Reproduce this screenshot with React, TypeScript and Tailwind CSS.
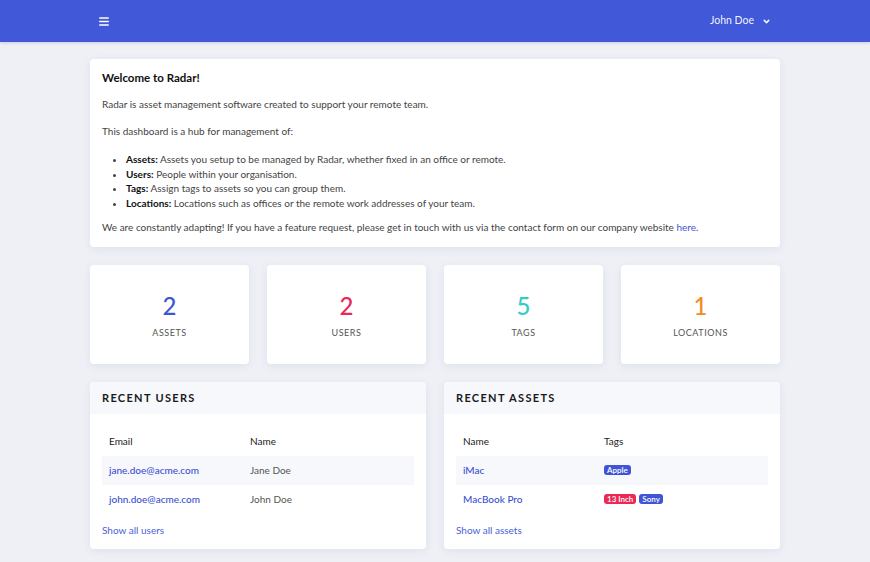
import { ChevronDown } from "lucide-react";

const stats = [
  { value: "2", label: "Assets", color: "text-[#3f55d6]" },
  { value: "2", label: "Users", color: "text-[#ea2a55]" },
  { value: "5", label: "Tags", color: "text-[#34cdc5]" },
  { value: "1", label: "Locations", color: "text-[#f28c28]" },
];

const users = [
  { email: "jane.doe@acme.com", name: "Jane Doe" },
  { email: "john.doe@acme.com", name: "John Doe" },
];

const assets = [
  { name: "iMac", tags: [{ label: "Apple", color: "bg-[#3f55d6]" }] },
  {
    name: "MacBook Pro",
    tags: [
      { label: "13 Inch", color: "bg-[#ea2a55]" },
      { label: "Sony", color: "bg-[#3f55d6]" },
    ],
  },
];

const Panel = ({ title, children }: { title: string; children: React.ReactNode }) => (
  <div className="col-span-2 rounded bg-white shadow-[0_2px_8px_rgba(60,70,120,0.08)]">
    <div className="flex h-8 items-center rounded-t bg-[#f7f8fb] px-3">
      <h3 className="pt-px text-[11px] font-bold uppercase tracking-[0.12em] text-[#1a1a1a]">{title}</h3>
    </div>
    <div className="px-3 pb-3 pt-[13px]">{children}</div>
  </div>
);

export default function App() {
  return (
    <div className="min-h-screen bg-[#eef0f6] font-['Lato','Noto_Sans',sans-serif] text-[#333]">
      <header className="h-[42px] bg-[#4158d9] shadow-[0_1px_3px_rgba(0,0,0,0.15)]">
        <div className="mx-auto flex h-full w-[690px] items-center justify-between pl-[9px] pr-[9px]">
          <svg width="10" height="9" viewBox="0 0 10 9" className="text-white">
            <path d="M0.8 1h8.4M0.8 4.5h8.4M0.8 8h8.4" stroke="currentColor" strokeWidth="1.6" strokeLinecap="round" />
          </svg>
          <div className="flex items-center gap-[8px] text-[10.5px] text-white/95">
            <span>John Doe</span>
            <ChevronDown className="h-[9px] w-[9px]" strokeWidth={4} />
          </div>
        </div>
      </header>

      <main className="mx-auto w-[690px] pt-[17px]">
        <section className="rounded bg-white px-3 pb-[12px] pt-[9px] text-[10px] leading-[14.5px] text-[#444] shadow-[0_2px_8px_rgba(60,70,120,0.08)]">
          <h2 className="text-[11.5px] font-bold leading-5 text-[#111]">Welcome to Radar!</h2>
          <p className="mt-[9px]">Radar is asset management software created to support your remote team.</p>
          <p className="mt-[12.5px]">This dashboard is a hub for management of:</p>
          <ul className="mt-[13.5px] list-disc pl-6">
            <li>
              <strong className="font-bold text-[#111]">Assets:</strong> Assets you setup to be managed by Radar, whether fixed in an office or remote.
            </li>
            <li>
              <strong className="font-bold text-[#111]">Users:</strong> People within your organisation.
            </li>
            <li>
              <strong className="font-bold text-[#111]">Tags:</strong> Assign tags to assets so you can group them.
            </li>
            <li>
              <strong className="font-bold text-[#111]">Locations:</strong> Locations such as offices or the remote work addresses of your team.
            </li>
          </ul>
          <p className="mt-[10px]">
            We are constantly adapting! If you have a feature request, please get in touch with us via the contact form on our company website{" "}
            <a className="text-[#3f55d6]">here</a>.
          </p>
        </section>

        <div className="mt-[18px] grid grid-cols-4 gap-[18px]">
          {stats.map((s) => (
            <div
              key={s.label}
              className="flex h-[99px] flex-col items-center justify-center rounded bg-white pt-[2px] shadow-[0_2px_8px_rgba(60,70,120,0.08)]"
            >
              <span className={`text-[24px] font-medium leading-7 ${s.color}`}>{s.value}</span>
              <span className="mt-[7px] text-[9px] leading-3 uppercase tracking-[0.06em] text-[#555]">{s.label}</span>
            </div>
          ))}

          <Panel title="Recent Users">
            <table className="w-full text-left text-[10px]">
              <thead>
                <tr className="h-[29px] text-[#222]">
                  <th className="w-[141px] px-[7px] font-normal">Email</th>
                  <th className="px-[7px] font-normal">Name</th>
                </tr>
              </thead>
              <tbody>
                {users.map((u, i) => (
                  <tr key={u.email} className={`h-[29px] ${i === 0 ? "bg-[#f7f8fb]" : ""}`}>
                    <td className="px-[7px] font-medium text-[#3a4fd2]">{u.email}</td>
                    <td className="px-[7px] text-[#555]">{u.name}</td>
                  </tr>
                ))}
              </tbody>
            </table>
            <a className="mt-[9px] block text-[10px] leading-[14px] text-[#4a5fd8]">Show all users</a>
          </Panel>

          <Panel title="Recent Assets">
            <table className="w-full text-left text-[10px]">
              <thead>
                <tr className="h-[29px] text-[#222]">
                  <th className="w-[141px] px-[7px] font-normal">Name</th>
                  <th className="px-[7px] font-normal">Tags</th>
                </tr>
              </thead>
              <tbody>
                {assets.map((a, i) => (
                  <tr key={a.name} className={`h-[29px] ${i === 0 ? "bg-[#f7f8fb]" : ""}`}>
                    <td className="px-[7px] font-medium text-[#3a4fd2]">{a.name}</td>
                    <td className="px-[7px]">
                      <div className="flex gap-[3px]">
                        {a.tags.map((t) => (
                          <span
                            key={t.label}
                            className={`rounded-[3px] px-[3px] text-[8px] font-semibold leading-[10px] text-white ${t.color}`}
                          >
                            {t.label}
                          </span>
                        ))}
                      </div>
                    </td>
                  </tr>
                ))}
              </tbody>
            </table>
            <a className="mt-[9px] block text-[10px] leading-[14px] text-[#4a5fd8]">Show all assets</a>
          </Panel>
        </div>
      </main>
    </div>
  );
}
